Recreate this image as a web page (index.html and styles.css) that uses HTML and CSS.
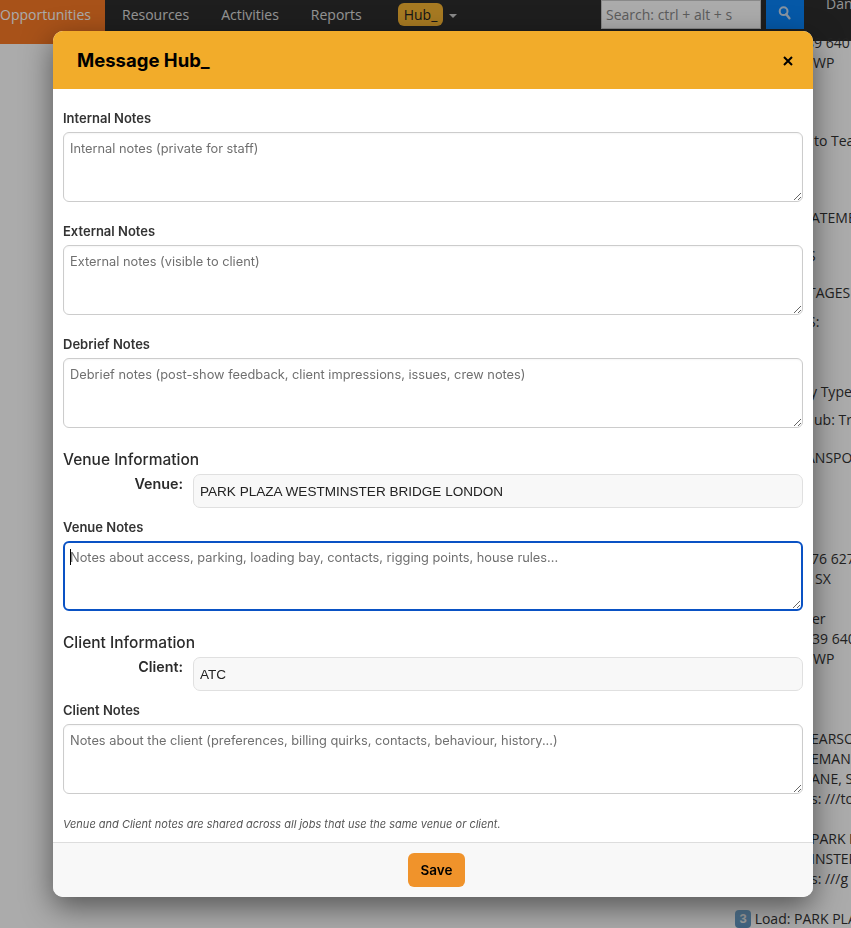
FILE: index.html
```html
<!DOCTYPE html>
<html lang="en">
<head>
<meta charset="utf-8">
<title>Message Hub</title>
<link rel="stylesheet" href="styles.css">
</head>
<body>
<header class="navbar">
  <a class="nav-item nav-active">Opportunities</a>
  <a class="nav-item">Resources</a>
  <a class="nav-item">Activities</a>
  <a class="nav-item">Reports</a>
  <span class="hub"><span class="hub-badge">Hub_</span><span class="hub-caret"></span></span>
  <div class="nav-right">
    <input class="search" placeholder="Search: ctrl + alt + s">
    <button class="search-btn" aria-label="Search">
      <svg class="search-icon" width="14" height="14" viewBox="0 0 14 14" fill="none" stroke="#c9dcf0" stroke-linecap="round"><circle cx="5.6" cy="5.2" r="3.9" stroke-width="2"/><path d="M8.2 8.2l3.2 4" stroke-width="2.4"/></svg>
    </button>
    <span class="user">Dan</span>
  </div>
</header>

<main class="sheet">
  <div class="ln x806 g1">89 640</div>
  <div class="ln g0">WP</div>
  <div class="ln x814 g2">to Team</div>
  <div class="ln x811 g3">ATEMENT</div>
  <div class="ln x808 g4">S</div>
  <div class="ln x808 g11">TAGES</div>
  <div class="ln x808 g5">S:</div>
  <div class="ln x810 g6">y Type</div>
  <div class="ln x814 g7">ub: Transport</div>
  <div class="ln x806 g4">ANSPORT</div>
  <div class="ln x811 g8">76 627</div>
  <div class="ln x815 g0">SX</div>
  <div class="ln x812 g9">er</div>
  <div class="ln x812 g0">39 640</div>
  <div class="ln g0">WP</div>
  <div class="ln x811 g10">EARSON</div>
  <div class="ln x811 g0">EMAN:</div>
  <div class="ln x811 g0">ANE, S</div>
  <div class="ln x811 g0">s: ///to</div>
  <div class="ln x811 g9">PARK P</div>
  <div class="ln x811 g0">INSTER</div>
  <div class="ln x811 g0">s: ///g</div>
  <div class="ln x735 g9"><span class="keycap">3</span> Load: PARK PLAZA</div>
</main>

<div class="backdrop"></div>

<section class="modal" role="dialog">
  <div class="modal-head">
    <h2 class="modal-title">Message Hub_</h2>
    <button class="close" aria-label="Close">
      <svg width="10" height="10" viewBox="0 0 10 10" stroke="#000" stroke-width="2"><path d="M1 1l8 8M9 1l-8 8"/></svg>
    </button>
  </div>
  <div class="modal-body">
    <label class="field-label">Internal Notes</label>
    <textarea class="notes" placeholder="Internal notes (private for staff)"></textarea>
    <label class="field-label">External Notes</label>
    <textarea class="notes" placeholder="External notes (visible to client)"></textarea>
    <label class="field-label">Debrief Notes</label>
    <textarea class="notes" placeholder="Debrief notes (post-show feedback, client impressions, issues, crew notes)"></textarea>

    <h3 class="group-title">Venue Information</h3>
    <div class="ro-row">
      <label class="ro-label">Venue:</label>
      <input class="ro-input" value="PARK PLAZA WESTMINSTER BRIDGE LONDON" readonly>
    </div>
    <label class="field-label">Venue Notes</label>
    <div class="focus-wrap">
      <textarea class="notes notes-focus" placeholder="Notes about access, parking, loading bay, contacts, rigging points, house rules..."></textarea>
      <span class="caret"></span>
    </div>

    <h3 class="group-title group-client">Client Information</h3>
    <div class="ro-row">
      <label class="ro-label">Client:</label>
      <input class="ro-input" value="ATC" readonly>
    </div>
    <label class="field-label">Client Notes</label>
    <textarea class="notes" placeholder="Notes about the client (preferences, billing quirks, contacts, behaviour, history...)"></textarea>
    <p class="hint">Venue and Client notes are shared across all jobs that use the same venue or client.</p>
  </div>
  <div class="modal-foot">
    <button class="save">Save</button>
  </div>
</section>
</body>
</html>
```
FILE: styles.css
```css
* { box-sizing: border-box; }
html, body { margin: 0; height: 928px; overflow: hidden; background: #fff; }
body { font-family: "Open Sans", sans-serif; font-size: 14px; color: #333; }

.navbar {
  display: flex; align-items: flex-start; height: 41px; background: #2d2d2d;
}
.nav-item {
  color: #fff; opacity: .85; font-size: 14px; line-height: 20px;
  padding: 5px 16px 0; height: 41px;
}
.nav-active { background: #fb7b26; opacity: 1; width: 105px; height: 44px; padding: 5px 0 0; color: #fff; flex: none; }
.nav-item:nth-child(2) { margin-left: 1px; }
.hub { display: flex; align-items: center; margin-left: 20px; padding-top: 3px; }
.hub-badge { background: #f9b634; color: #222; border-radius: 6px; padding: 0 6px; height: 23px; line-height: 23px; font-size: 14px; }
.hub-caret { margin-left: 6px; border: 4px solid transparent; border-top-color: #ccc; border-bottom: 0; margin-top: 2px; }
.nav-right { display: flex; align-items: flex-start; margin-left: auto; }
.search { width: 160px; height: 29px; border: 1px solid #ccc; background: #fff; padding: 0 4px; font: 14px "Open Sans", sans-serif; outline: 0; display: block; }
.search::placeholder { color: #8a8a8a; opacity: 1; }
.search-btn { width: 38px; height: 29px; margin-left: 5px; border: 0; background: #0884f9; padding: 0 0 3px; display: flex; align-items: center; justify-content: center; }
.search-icon { display: block; }
.user { color: #ddd; margin-left: 22px; width: 25px; line-height: 20px; margin-top: -6px; white-space: nowrap; }

.sheet { white-space: nowrap; line-height: 20px; }
.ln { margin-left: 813px; height: 20px; }
.x735 { margin-left: 735px; }
.x806 { margin-left: 806px; }
.x808 { margin-left: 808px; }
.x810 { margin-left: 810px; }
.x811 { margin-left: 811px; }
.x812 { margin-left: 812px; }
.x814 { margin-left: 814px; }
.x815 { margin-left: 815px; }
.g0 { margin-top: 0; }
.g1 { margin-top: -8px; }
.g2 { margin-top: 58px; }
.g3 { margin-top: 57px; }
.g4 { margin-top: 18px; }
.g5 { margin-top: 9px; }
.g6 { margin-top: 50px; }
.g7 { margin-top: 8px; }
.g8 { margin-top: 81px; }
.g9 { margin-top: 20px; }
.g10 { margin-top: 60px; }
.g11 { margin-top: 17px; }
.keycap {
  display: inline-block; width: 16px; height: 18px; text-align: center;
  background: linear-gradient(#7fb2da, #5f95c2); color: #eee; border-radius: 4px; font: bold 13px/18px "Liberation Sans", sans-serif; vertical-align: 1px;
}

.backdrop { position: fixed; inset: 0; background: rgba(0,0,0,.33); }

.modal {
  position: absolute; left: 53px; top: 31px; width: 760px; height: 866px;
  display: flex; flex-direction: column; background: #fff; border-radius: 10px; overflow: hidden;
  box-shadow: 0 10px 30px rgba(0,0,0,.5);
  font-family: Inter, sans-serif;
}
.modal-head { height: 58px; flex: none; background: #f2ac2a; display: flex; align-items: center; justify-content: space-between; padding: 0 20px 0 24px; }
.modal-title { margin: 0; font-size: 18.5px; font-weight: 700; color: #000; }
.close { border: 0; background: none; padding: 0; width: 10px; height: 10px; display: block; line-height: 0; margin-top: 2px; }
.modal-body { flex: 1; padding: 21px 10px 0; }
.field-label { display: block; font-size: 13px; font-weight: 600; line-height: 16px; color: #333; margin-bottom: 6px; }
.notes {
  display: block; width: 100%; height: 70px; margin-bottom: 21px; padding: 6px;
  border: 1px solid #ccc; border-radius: 6px; background: #fff;
  font: 12.8px/19px Inter, sans-serif; outline: 0; box-shadow: inset 0 1px 2px rgba(0,0,0,.04);
}
.notes::placeholder { color: #6f6f6f; opacity: 1; }
.notes-focus { border: 2px solid #0a52c4; padding: 5px; box-shadow: none; }
.focus-wrap { position: relative; }
.caret { position: absolute; left: 7px; top: 8px; width: 1px; height: 16px; background: #000; }
.group-title { margin: 0 0 5px; padding-top: 2px; font-size: 15.5px; font-weight: 500; line-height: 18px; color: #2b2b2b; }
.ro-row { display: flex; gap: 10px; align-items: flex-start; margin-bottom: 11px; }
.ro-label { width: 120px; text-align: right; font-size: 14.3px; font-weight: 600; line-height: 20px; color: #2b2b2b; }
.ro-input {
  flex: 1; height: 34px; padding: 0 6px; border: 1px solid #e0e0e0; border-radius: 7px; background: #f8f8f8;
  font: 13.55px "Liberation Sans", sans-serif; color: #222; outline: 0;
}
.hint { margin: 0; font-size: 11px; font-style: italic; color: #555; line-height: 14px; padding-top: 2px; }
.modal-foot { height: 55px; flex: none; background: #f8f8f8; border-top: 1px solid #ddd; display: flex; align-items: center; justify-content: center; }
.save { width: 57px; height: 34px; margin-left: 7px; border: 0; border-radius: 6px; background: #f0932b; color: #000; font: 600 13.5px Inter, sans-serif; padding: 0; }
```
